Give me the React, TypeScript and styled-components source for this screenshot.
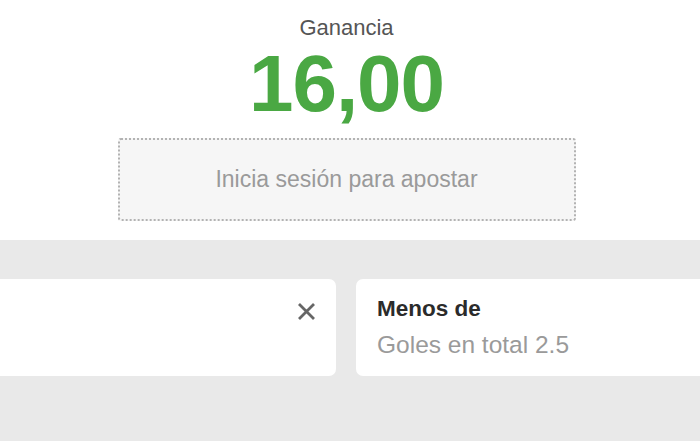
import React from 'react';
import styled, { createGlobalStyle } from 'styled-components';

const GlobalStyle = createGlobalStyle`
  html, body {
    margin: 0;
    padding: 0;
    background: #ffffff;
    font-family: "Liberation Sans", Arial, Helvetica, sans-serif;
  }
`;

const Page = styled.div`
  width: 700px;
  height: 441px;
  overflow: hidden;
  display: flex;
  flex-direction: column;
`;

const Summary = styled.section`
  height: 240px;
  box-sizing: border-box;
  padding: 16px 7px 0 0;
  display: flex;
  flex-direction: column;
  align-items: center;
  background: #ffffff;
`;

const Label = styled.div`
  font-size: 22px;
  line-height: 24px;
  color: #555555;
`;

const Amount = styled.div`
  margin-top: 4px;
  font-size: 80px;
  line-height: 80px;
  font-weight: 700;
  color: #4aa843;
  letter-spacing: -1px;
`;

const LoginBox = styled.div`
  margin-top: 14px;
  width: 458px;
  height: 83px;
  box-sizing: border-box;
  border: 2px dotted #b3b3b3;
  border-radius: 3px;
  background: #f6f6f6;
  display: flex;
  align-items: center;
  justify-content: center;
  font-size: 23px;
  color: #9a9a9a;
`;

const Tray = styled.section`
  flex: 1;
  background: #e9e9e9;
  padding-top: 39px;
  overflow: hidden;
`;

const Track = styled.div`
  display: flex;
  gap: 20px;
  margin-left: -24px;
`;

const Card = styled.div`
  flex: 0 0 360px;
  height: 97px;
  box-sizing: border-box;
  background: #ffffff;
  border-radius: 7px;
  padding: 17px 20px 0 21px;
  display: flex;
  justify-content: space-between;
  align-items: flex-start;
`;

const CardText = styled.div`
  display: flex;
  flex-direction: column;
`;

const Market = styled.div`
  font-size: 22.5px;
  line-height: 26px;
  font-weight: 700;
  color: #2b2b2b;
`;

const Selection = styled.div`
  margin-top: 9px;
  font-size: 24.5px;
  line-height: 28px;
  color: #9a9a9a;
`;

const CloseButton = styled.button`
  margin-top: 6px;
  margin-left: auto;
  padding: 0;
  border: none;
  background: none;
  width: 19px;
  height: 19px;
  display: flex;
  cursor: pointer;
`;

const CloseIcon = () => (
  <svg width="19" height="19" viewBox="0 0 19 19" fill="none">
    <path d="M2 2L17 17M17 2L2 17" stroke="#666666" strokeWidth="2.8" />
  </svg>
);

export default function App() {
  return (
    <>
      <GlobalStyle />
      <Page>
        <Summary>
          <Label>Ganancia</Label>
          <Amount>16,00</Amount>
          <LoginBox>Inicia sesión para apostar</LoginBox>
        </Summary>
        <Tray>
          <Track>
            <Card>
              <CloseButton aria-label="Quitar">
                <CloseIcon />
              </CloseButton>
            </Card>
            <Card>
              <CardText>
                <Market>Menos de</Market>
                <Selection>Goles en total 2.5</Selection>
              </CardText>
            </Card>
          </Track>
        </Tray>
      </Page>
    </>
  );
}
